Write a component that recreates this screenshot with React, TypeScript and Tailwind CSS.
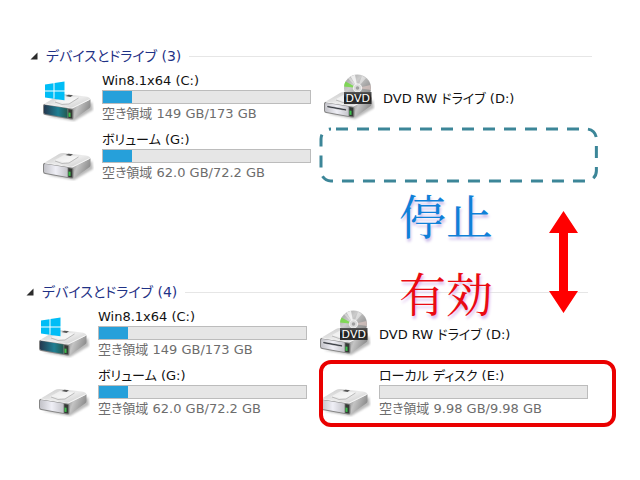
import React, { useState } from "react";

type Kind = "system" | "disk" | "dvd";

interface Drive {
  name: string;
  kind: Kind;
  space?: string;
  used?: number;
}

const systemDrive: Drive = {
  name: "Win8.1x64 (C:)",
  kind: "system",
  space: "空き領域 149 GB/173 GB",
  used: 14,
};
const dvdDrive: Drive = { name: "DVD RW ドライブ (D:)", kind: "dvd" };
const volume: Drive = {
  name: "ボリューム (G:)",
  kind: "disk",
  space: "空き領域 62.0 GB/72.2 GB",
  used: 14,
};
const localDisk: Drive = {
  name: "ローカル ディスク (E:)",
  kind: "disk",
  space: "空き領域 9.98 GB/9.98 GB",
  used: 0,
};

// shared gradients, referenced by every drive icon
const IconDefs = () => (
  <svg width="0" height="0" className="absolute" aria-hidden="true">
    <defs>
      <linearGradient id="top" x1="0" y1="0" x2="1" y2="1">
        <stop offset="0" stopColor="#c4c4c4" />
        <stop offset="0.5" stopColor="#ececec" />
        <stop offset="1" stopColor="#c2c2c2" />
      </linearGradient>
      <linearGradient id="side" x1="0" y1="0" x2="1" y2="0.4">
        <stop offset="0" stopColor="#7f7f7f" />
        <stop offset="0.4" stopColor="#c4c4c4" />
        <stop offset="1" stopColor="#8a8a8a" />
      </linearGradient>
      <linearGradient id="front" x1="0" y1="0" x2="1" y2="0">
        <stop offset="0" stopColor="#c2c2c8" />
        <stop offset="0.5" stopColor="#efeff6" />
        <stop offset="1" stopColor="#c4c4ca" />
      </linearGradient>
      <linearGradient id="glow" x1="0" y1="0" x2="1" y2="0">
        <stop offset="0" stopColor="#24384f" />
        <stop offset="0.6" stopColor="#1f7f93" />
        <stop offset="1" stopColor="#245a50" />
      </linearGradient>
      <linearGradient id="disc" x1="0" y1="0" x2="1" y2="1">
        <stop offset="0" stopColor="#969696" />
        <stop offset="0.35" stopColor="#cccccc" />
        <stop offset="0.6" stopColor="#a6a6a6" />
        <stop offset="1" stopColor="#7c7c7c" />
      </linearGradient>
      <linearGradient id="label" x1="0" y1="0" x2="0" y2="1">
        <stop offset="0" stopColor="#555555" />
        <stop offset="0.5" stopColor="#1c1c1c" />
        <stop offset="1" stopColor="#333333" />
      </linearGradient>
      <filter id="soft" x="-20%" y="-50%" width="140%" height="200%">
        <feGaussianBlur stdDeviation="1.2" />
      </filter>
    </defs>
  </svg>
);

const DriveIcon = ({ kind }: { kind: Kind }) => (
  <svg width="52" height="49" viewBox="0 0 52 49" className="shrink-0" aria-hidden="true">
    <g transform={kind === "dvd" ? "translate(0 -2)" : undefined}>
      <path d="M5 43 32 48 51 37 50 29 30 40Z" fill="#777" opacity="0.5" filter="url(#soft)" />
      <path d="M2 31 17 22Q19 20.800 22 21L44 23.500Q48.500 24.200 48.500 27L31 36.500Z" fill="url(#top)" />
      <path d="M30.500 35.500 48.500 26.500V33Q48.500 34.500 47 35.500L32.500 45.800Q31 47 29.500 46.500Z" fill="url(#side)" />
      <path d="M12 28.500 22 23 36 24.500 27 30.700Z" fill="#fff" opacity="0.5" />
      <path d="M13 29Q20 33 27 31L36.500 25" fill="none" stroke="#b0b0b0" strokeWidth="0.8" />
      <path d="M23.500 23 26.500 21.700 31 22.200 28.500 24Z" fill="#555" />
      <path d="M1 32.500Q1 30.800 3 31L29 34.800Q31.500 35.300 31.500 37.500V45Q31.500 47 29 46.500L3 42Q1 41.500 1 39.500Z" fill="#858585" />
      <path
        d="M2 33.300Q2 31.900 3.500 32.100L25.500 35.500V44.900L3.500 41Q2 40.700 2 39.200Z"
        fill={kind === "system" ? "url(#glow)" : "url(#front)"}
      />
      <path d="M3 31 30 35.100 47.500 26.500" fill="none" stroke="#f8f8f8" strokeWidth="0.9" />
      <path d="M26.300 36 30.300 36.800V45.600L26.300 44.900Z" fill="#343a35" />
      <path d="M26.500 39.500 28.500 39.800V44L26.500 43.700Z" fill="#3cc04c" />
      {kind === "dvd" && (
        <path d="M4 34.500 23.500 38V40L4 36.500Z" fill="#33373f" stroke="#fff" strokeWidth="0.5" />
      )}
    </g>
    {kind === "system" && (
      <path
        d="M3 11.500 11.500 10.300V17.500H3ZM12.500 10.100 22.500 8.500V17.500H12.500ZM3 18.500H11.500V25.700L3 24.600ZM12.500 18.500H22.500V27.300L12.500 25.900Z"
        fill="#00bdf6"
      />
    )}
    {kind === "dvd" && (
      <g>
        <circle cx="34.500" cy="15" r="13.500" fill="url(#disc)" />
        <path d="M34.500 15 22.500 8.500Q21.300 10.500 21 13.500Z" fill="#6fdc3c" opacity="0.8" />
        <path d="M34.500 15 27.500 3.500 32 1.800Z" fill="#fff" opacity="0.75" />
        <path d="M34.500 15 25 5.500 27 3.800Z" fill="#fff" opacity="0.4" />
        <path d="M34.500 15 47.500 12 48 17Z" fill="#dcc6c2" opacity="0.7" />
        <path d="M34.500 15 39 3 43 5Z" fill="#fff" opacity="0.45" />
        <circle cx="34.500" cy="15" r="4.200" fill="#dcdcdc" stroke="#fafafa" strokeWidth="0.8" />
        <circle cx="34.500" cy="15" r="1.800" fill="#a0a0a0" />
        <path d="M21 19H48.500V31H21Z" fill="url(#label)" />
        <text
          x="34.750"
          y="29"
          textAnchor="middle"
          fontFamily="'DejaVu Sans', sans-serif"
          fontSize="11"
          fill="#fff"
        >
          DVD
        </text>
      </g>
    )}
  </svg>
);

const DriveTile = ({ drive, marked = false }: { drive: Drive; marked?: boolean }) => (
  <li className="relative flex h-[59px] items-start gap-2 pr-3">
    <DriveIcon kind={drive.kind} />
    {drive.space ? (
      <div className="min-w-0 flex-1">
        <p className="leading-4 whitespace-nowrap text-[#111]">{drive.name}</p>
        <div
          role="progressbar"
          aria-label={drive.name}
          aria-valuenow={drive.used}
          className="mt-px h-[14px] border border-[#bcbcbc] bg-[#e6e6e6]"
        >
          <div className="h-full bg-[#26a0da]" style={{ width: `${drive.used}%` }} />
        </div>
        <p className="mt-0.5 leading-4 whitespace-nowrap text-[#6d6d6d]">{drive.space}</p>
      </div>
    ) : (
      <p className="mt-4 leading-5 whitespace-nowrap text-[#111]">{drive.name}</p>
    )}
    {marked && (
      <div className="absolute -top-2 -right-4 bottom-0 left-0 rounded-xl border-4 border-[#ea0000]" />
    )}
  </li>
);

// outline standing where the disabled drive would be
const EmptySlot = () => (
  <li className="relative h-[59px]">
    <svg className="absolute -top-1 -left-1 h-14 w-full overflow-visible" aria-hidden="true">
      <rect
        x="2"
        y="1"
        width="98%"
        height="52"
        rx="10"
        fill="none"
        stroke="#3c8698"
        strokeWidth="3"
        strokeDasharray="12 9"
        strokeDashoffset="-5"
      />
    </svg>
  </li>
);

const GroupHeader = ({ count }: { count: number }) => {
  const [open, setOpen] = useState(true);

  return (
    <div className="mr-3 -ml-3 flex h-5 items-center gap-2">
      <button
        type="button"
        aria-expanded={open}
        onClick={() => setOpen(!open)}
        className="flex items-center gap-2 text-sm leading-5 whitespace-nowrap text-[#1f3286]"
      >
        <svg width="8" height="8" viewBox="0 0 8 8" aria-hidden="true">
          <path d="M7.500 0.500V7.500H0.500Z" fill="#2b2b2b" />
        </svg>
        <span>デバイスとドライブ ({count})</span>
      </button>
      <div className="h-px flex-1 bg-[#e6e6e6]" />
    </div>
  );
};

const App = () => {
  return (
    <main
      lang="ja"
      className="relative bg-white pb-12 font-['DejaVu_Sans','Noto_Sans_CJK_JP',sans-serif] text-[13px] [font-feature-settings:'palt']"
    >
      <IconDefs />
      <section className="pt-[46px] pr-9 pl-[42px]">
        <GroupHeader count={3} />
        <ul className="mt-[7px] grid grid-cols-2">
          <DriveTile drive={systemDrive} />
          <DriveTile drive={dvdDrive} />
          <DriveTile drive={volume} />
          <EmptySlot />
        </ul>
      </section>

      <section className="mt-[91px] pr-10 pl-[38px]">
        <GroupHeader count={4} />
        <ul className="mt-[7px] grid grid-cols-2">
          <DriveTile drive={systemDrive} />
          <DriveTile drive={dvdDrive} />
          <DriveTile drive={volume} />
          <DriveTile drive={localDisk} marked />
        </ul>
      </section>

      {/* notes laid over the two lists */}
      <div className="absolute top-[189px] right-[62px] flex items-end gap-14 font-['Noto_Serif_CJK_JP',serif] text-[47px] leading-[50px]">
        <div>
          <p className="text-[#0f80d8] [text-shadow:1px_3px_3px_#c9b8e8]">停止</p>
          <p className="mt-7 text-[#ea0a12] [text-shadow:1px_3px_3px_#d9b8ec]">有効</p>
        </div>
        <svg width="29" height="102" viewBox="0 0 29 102" className="mb-1" aria-hidden="true">
          <path d="M14.500 0 29 22H19V80H29L14.500 102 0 80H10V22H0Z" fill="#ff0000" />
        </svg>
      </div>
    </main>
  );
};

export default App;
